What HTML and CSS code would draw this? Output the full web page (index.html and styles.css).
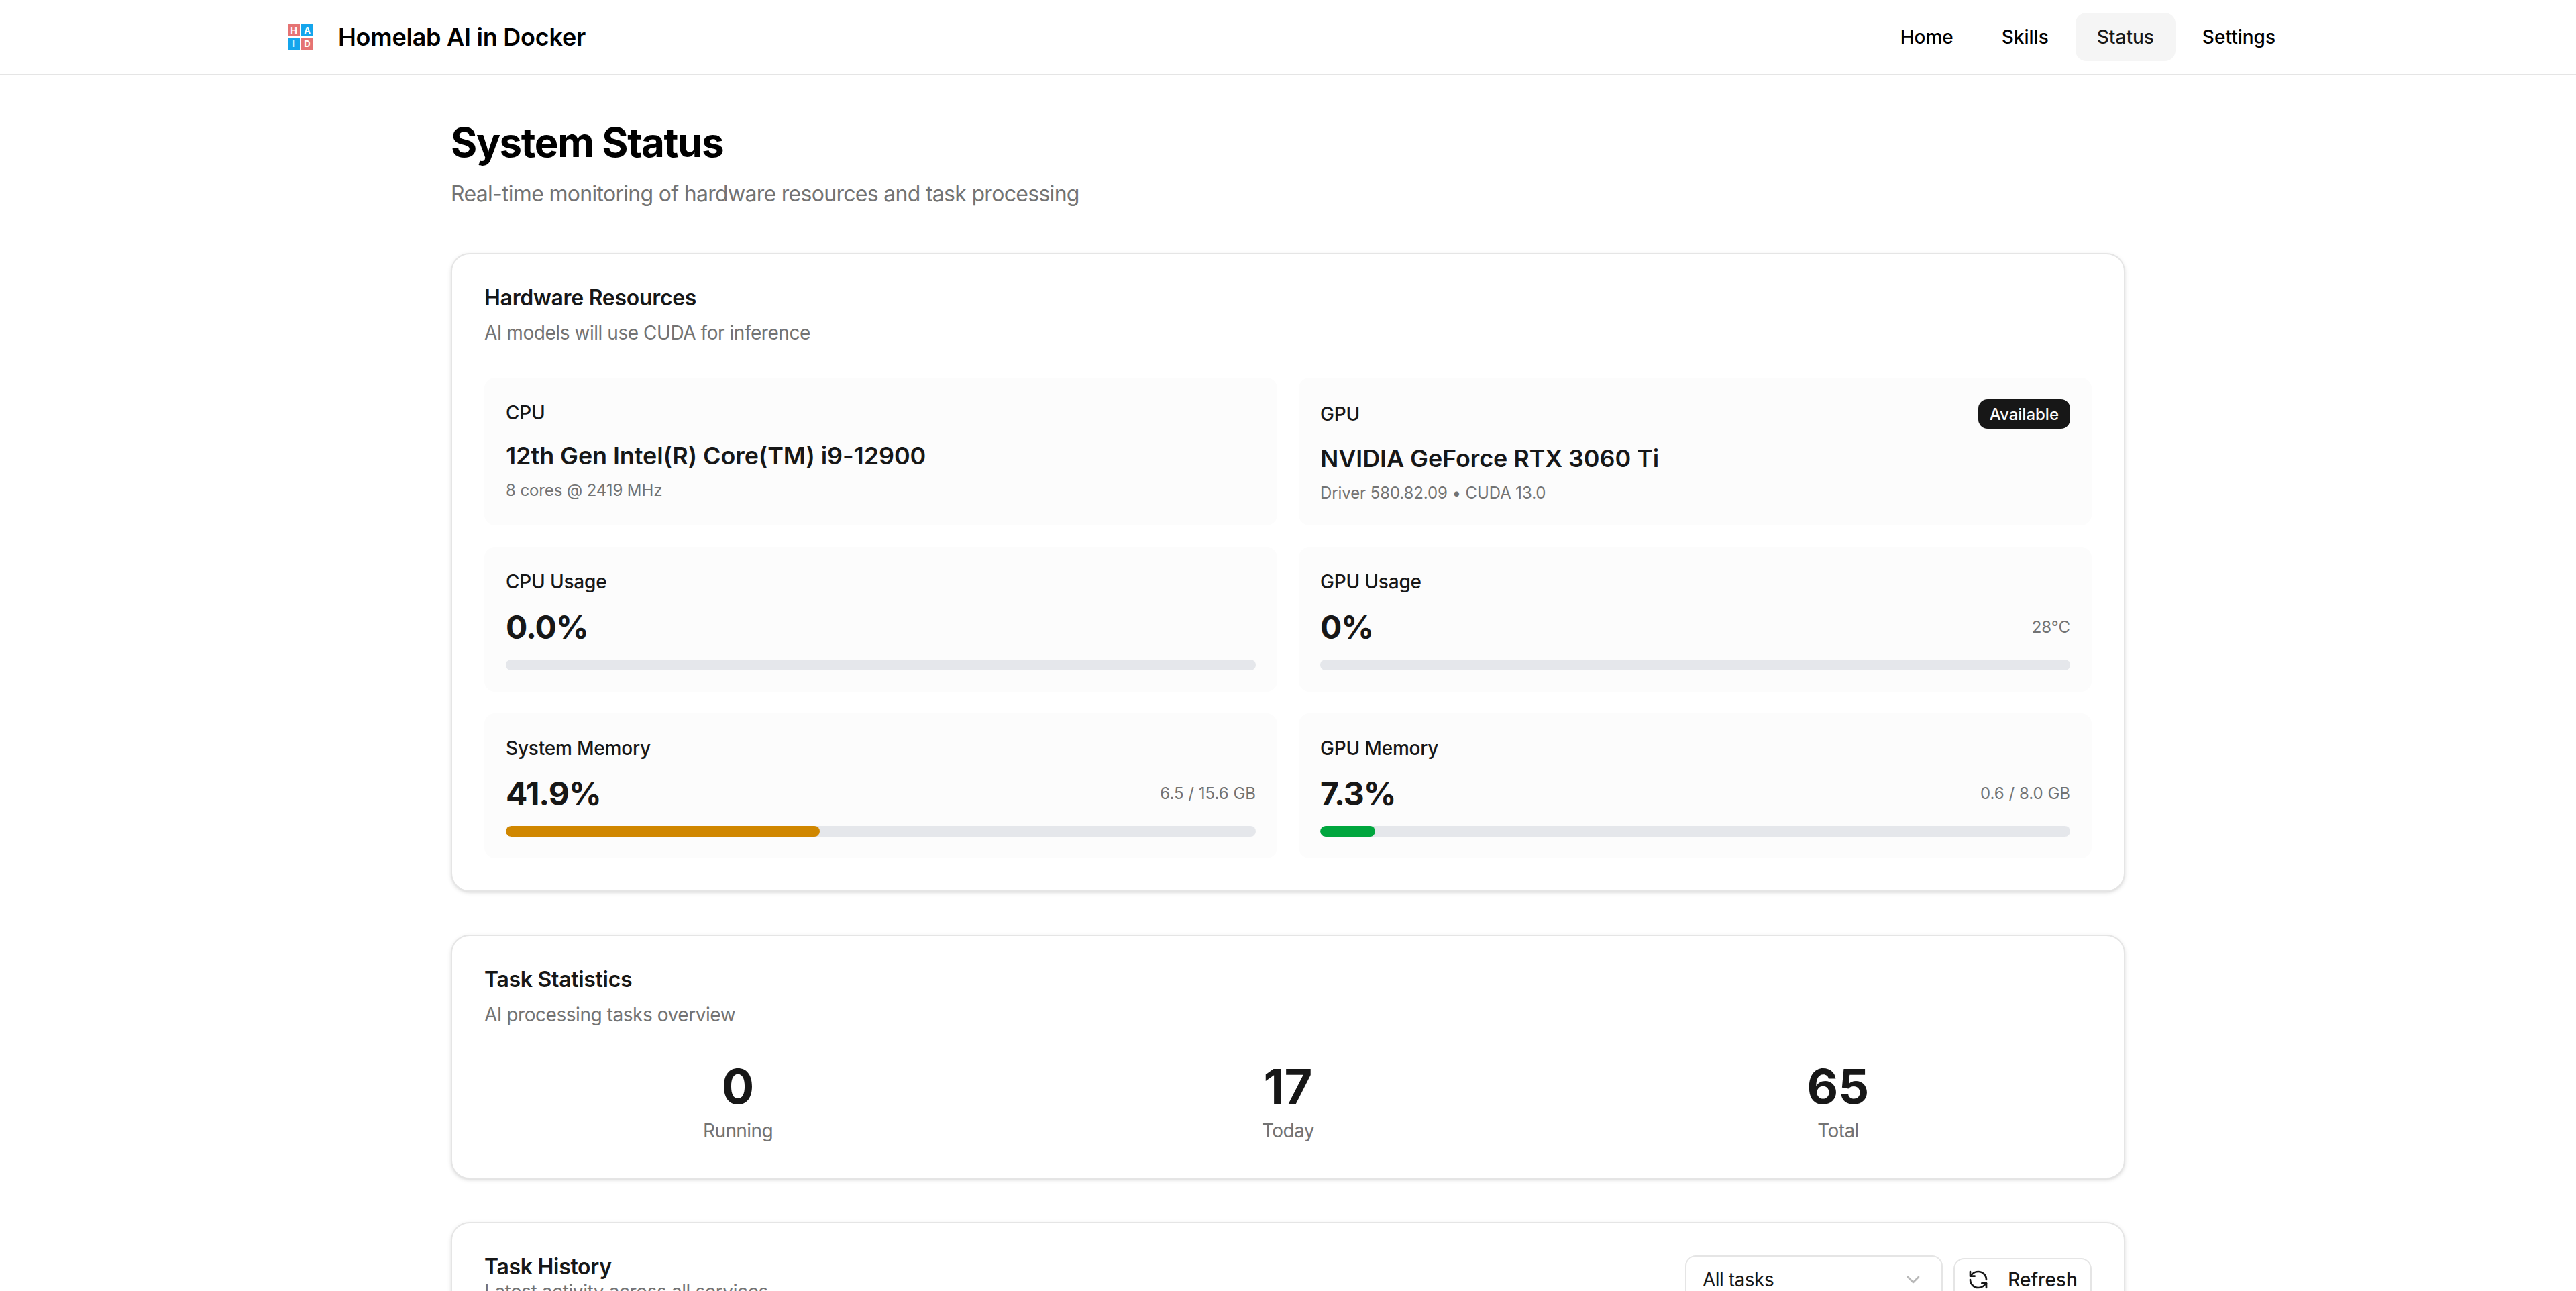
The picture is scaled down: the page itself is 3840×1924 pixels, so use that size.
FILE: index.html
```html
<!DOCTYPE html>
<html lang="en">
<head>
  <meta charset="UTF-8" />
  <title>Homelab AI in Docker</title>
  <link rel="stylesheet" href="styles.css">
</head>
<body>

  <header class="topbar">
    <div class="topbar-inner">
      <a class="brand">
        <span class="logo">
          <span class="logo-cell red">H</span>
          <span class="logo-cell blue">A</span>
          <span class="logo-cell blue">I</span>
          <span class="logo-cell red">D</span>
        </span>
        <span class="brand-name">Homelab AI in Docker</span>
      </a>
      <nav class="nav">
        <a class="nav-link">Home</a>
        <a class="nav-link">Skills</a>
        <a class="nav-link active">Status</a>
        <a class="nav-link">Settings</a>
      </nav>
    </div>
  </header>

  <main class="page">
    <h1 class="page-title">System Status</h1>
    <p class="page-sub">Real-time monitoring of hardware resources and task processing</p>

    <section class="card">
      <h2 class="card-title">Hardware Resources</h2>
      <p class="card-sub">AI models will use CUDA for inference</p>
      <div class="hw-grid">
        <div class="tile">
          <div class="tile-head"><span class="tile-label">CPU</span></div>
          <div class="hw-name">12th Gen Intel(R) Core(TM) i9-12900</div>
          <div class="hw-detail">8 cores @ 2419 MHz</div>
        </div>
        <div class="tile">
          <div class="tile-head">
            <span class="tile-label">GPU</span>
            <span class="badge">Available</span>
          </div>
          <div class="hw-name">NVIDIA GeForce RTX 3060 Ti</div>
          <div class="hw-detail">Driver 580.82.09 • CUDA 13.0</div>
        </div>
        <div class="tile">
          <div class="tile-head"><span class="tile-label">CPU Usage</span></div>
          <div class="metric-row"><span class="metric">0.0%</span></div>
          <div class="bar"></div>
        </div>
        <div class="tile">
          <div class="tile-head"><span class="tile-label">GPU Usage</span></div>
          <div class="metric-row"><span class="metric">0%</span><span class="metric-note">28°C</span></div>
          <div class="bar"></div>
        </div>
        <div class="tile">
          <div class="tile-head"><span class="tile-label">System Memory</span></div>
          <div class="metric-row"><span class="metric">41.9%</span><span class="metric-note">6.5 / 15.6 GB</span></div>
          <div class="bar"><div class="bar-fill amber" style="width: 41.9%"></div></div>
        </div>
        <div class="tile">
          <div class="tile-head"><span class="tile-label">GPU Memory</span></div>
          <div class="metric-row"><span class="metric">7.3%</span><span class="metric-note">0.6 / 8.0 GB</span></div>
          <div class="bar"><div class="bar-fill green" style="width: 7.3%"></div></div>
        </div>
      </div>
    </section>

    <section class="card">
      <h2 class="card-title">Task Statistics</h2>
      <p class="card-sub">AI processing tasks overview</p>
      <div class="stats">
        <div class="stat"><div class="stat-num">0</div><div class="stat-label">Running</div></div>
        <div class="stat"><div class="stat-num">17</div><div class="stat-label">Today</div></div>
        <div class="stat"><div class="stat-num">65</div><div class="stat-label">Total</div></div>
      </div>
    </section>

    <section class="card">
      <div class="history-head">
        <div>
          <h2 class="card-title">Task History</h2>
          <p class="card-sub tight">Latest activity across all services</p>
        </div>
        <div class="history-tools">
          <div class="select">
            <span>All tasks</span>
            <svg class="chevron" viewBox="0 0 24 24" fill="none" stroke="currentColor" stroke-width="2" stroke-linecap="round" stroke-linejoin="round"><path d="m6 9 6 6 6-6"/></svg>
          </div>
          <button class="btn">
            <svg class="btn-icon" viewBox="0 0 24 24" fill="none" stroke="currentColor" stroke-width="2" stroke-linecap="round" stroke-linejoin="round"><path d="M21 12a9 9 0 0 0-9-9 9.75 9.75 0 0 0-6.74 2.74L3 8"/><path d="M3 3v5h5"/><path d="M3 12a9 9 0 0 0 9 9 9.75 9.75 0 0 0 6.74-2.74L21 16"/><path d="M16 16h5v5"/></svg>
            Refresh
          </button>
        </div>
      </div>
    </section>
  </main>

</body>
</html>
```

FILE: styles.css
```css
* {
  box-sizing: border-box;
}

html, body {
  margin: 0;
  height: 1924px;
  overflow: hidden;
}

body {
  font-family: Inter, 'Noto Sans', sans-serif;
  background: #fff;
  color: #171717;
}

.topbar {
  height: 112px;
  border-bottom: 2px solid #e5e5e5;
}

.topbar-inner {
  width: 3008px;
  height: 110px;
  margin: 0 auto;
  display: flex;
  align-items: center;
  justify-content: space-between;
}

.brand {
  display: flex;
  align-items: center;
  gap: 24px;
}

.logo {
  width: 64px;
  height: 64px;
  padding: 13px;
  display: grid;
  grid-template-columns: 18px 18px;
  grid-template-rows: 18px 18px;
  gap: 2px;
}

.logo-cell {
  display: flex;
  align-items: center;
  justify-content: center;
  font-size: 13px;
  font-weight: 700;
  line-height: 18px;
  color: #fff;
}

.logo-cell.red { background: #e57373; }
.logo-cell.blue { background: #14a5ec; }

.brand-name {
  font-size: 36px;
  font-weight: 600;
  letter-spacing: -0.25px;
  color: #000;
}

.nav {
  display: flex;
  gap: 8px;
}

.nav-link {
  height: 72px;
  padding: 0 32px;
  display: flex;
  align-items: center;
  border-radius: 16px;
  font-size: 28px;
  font-weight: 500;
  color: #000;
}

.nav-link.active {
  background: #f5f5f5;
  color: #171717;
}

.page {
  width: 2496px;
  margin: 0 auto;
  padding-top: 64px;
}

.page-title {
  margin: 0;
  font-size: 60px;
  line-height: 72px;
  font-weight: 700;
  letter-spacing: -1.4px;
  color: #000;
}

.page-sub {
  margin: 17px 0 0;
  font-size: 32px;
  line-height: 48px;
  letter-spacing: -0.7px;
  color: #737373;
}

.card {
  margin-top: 64px;
  padding: 48px;
  background: #fff;
  border: 2px solid #e5e5e5;
  border-radius: 28px;
  box-shadow: 0 2px 6px rgba(0,0,0,0.1), 0 2px 4px -2px rgba(0,0,0,0.1);
}

.card-title {
  margin: 0;
  font-size: 32px;
  line-height: 34px;
  font-weight: 600;
  letter-spacing: -0.3px;
  color: #171717;
}

.card-sub {
  margin: 15px 0 0;
  font-size: 28px;
  line-height: 40px;
  letter-spacing: -0.45px;
  color: #737373;
}

.card-sub.tight {
  margin-top: 0;
  letter-spacing: -0.4px;
}

.hw-grid {
  margin-top: 47px;
  display: grid;
  grid-template-columns: 1fr 1fr;
  gap: 32px;
}

.tile {
  padding: 32px;
  background: #fcfcfc;
  border-radius: 16px;
}

.tile-head {
  display: flex;
  align-items: center;
  justify-content: space-between;
  min-height: 40px;
}

.tile-label {
  font-size: 28px;
  line-height: 40px;
  font-weight: 500;
  letter-spacing: -0.2px;
  color: #171717;
}

.badge {
  height: 44px;
  padding: 0 17px;
  display: flex;
  align-items: center;
  border-radius: 14px;
  background: #171717;
  color: #fafafa;
  font-size: 24px;
  font-weight: 500;
}

.hw-name {
  margin-top: 16px;
  font-size: 36px;
  line-height: 56px;
  font-weight: 600;
  letter-spacing: -0.1px;
  color: #171717;
}

.hw-detail {
  margin-top: 8px;
  font-size: 24px;
  line-height: 32px;
  letter-spacing: -0.1px;
  color: #737373;
}

.metric-row {
  margin: 16px 0;
  display: flex;
  align-items: center;
  justify-content: space-between;
}

.metric {
  font-size: 48px;
  line-height: 64px;
  font-weight: 700;
  letter-spacing: -1px;
  color: #171717;
}

.metric-note {
  font-size: 24px;
  line-height: 32px;
  color: #737373;
}

.bar {
  height: 16px;
  border-radius: 8px;
  background: #e5e7eb;
  overflow: hidden;
}

.bar-fill {
  height: 100%;
  border-radius: 8px;
}

.bar-fill.amber { background: #d08700; }
.bar-fill.green { background: #00a63e; }

.stats {
  margin: 47px 0 2px;
  display: grid;
  grid-template-columns: repeat(3, 1fr);
  gap: 64px;
  text-align: center;
}

.stat-num {
  font-size: 72px;
  line-height: 80px;
  font-weight: 700;
  color: #171717;
}

.stat-label {
  margin-top: 6px;
  font-size: 28px;
  line-height: 40px;
  letter-spacing: -0.6px;
  color: #737373;
}

.history-head {
  display: flex;
  align-items: flex-start;
  justify-content: space-between;
}

.history-tools {
  display: flex;
  align-items: center;
  gap: 16px;
}

.select {
  width: 384px;
  height: 72px;
  padding: 0 26px 0 24px;
  display: flex;
  align-items: center;
  justify-content: space-between;
  border: 2px solid #e5e5e5;
  border-radius: 16px;
  font-size: 28px;
  letter-spacing: -0.5px;
  color: #171717;
}

.chevron {
  width: 32px;
  height: 32px;
  color: #737373;
  opacity: 0.5;
}

.btn {
  width: 206px;
  height: 64px;
  padding: 0;
  display: flex;
  align-items: center;
  justify-content: center;
  gap: 28px;
  background: #fff;
  border: 2px solid #e5e5e5;
  border-radius: 16px;
  font-family: inherit;
  font-size: 28px;
  font-weight: 500;
  color: #171717;
}

.btn-icon {
  width: 32px;
  height: 32px;
}
```
